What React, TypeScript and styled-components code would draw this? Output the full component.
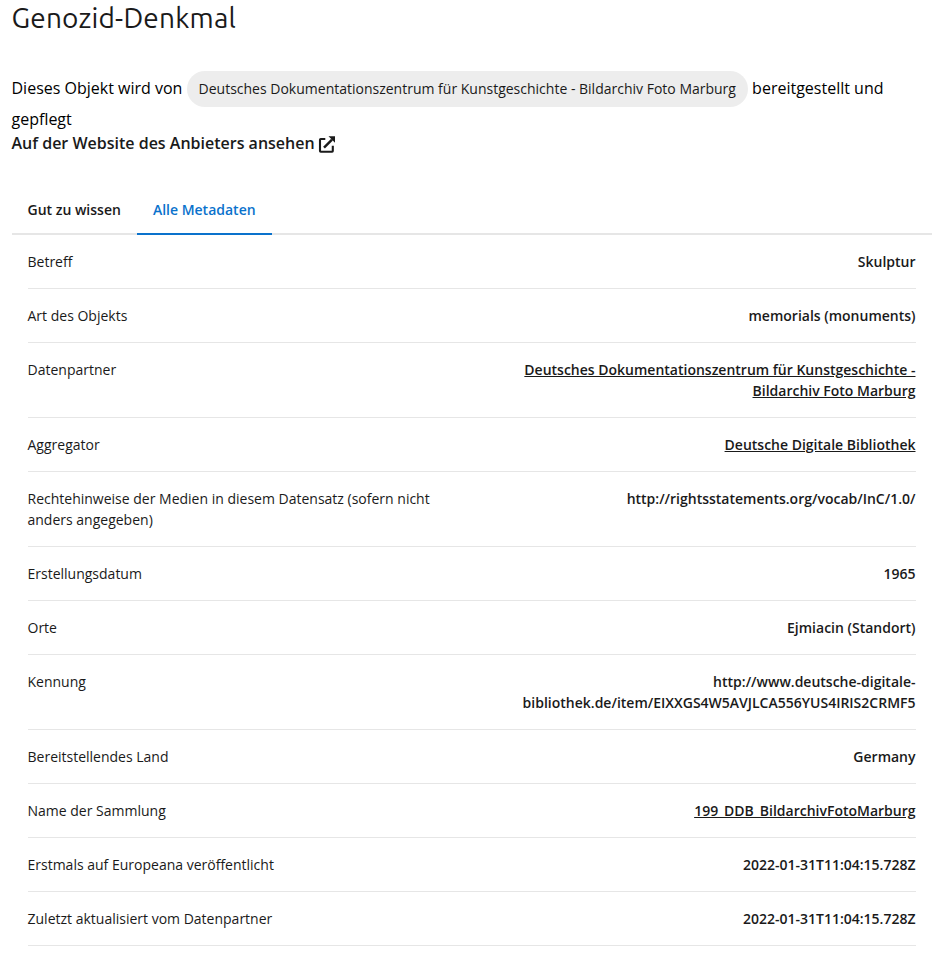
import React from "react";
import styled, { createGlobalStyle } from "styled-components";

const GlobalStyle = createGlobalStyle`
  * { box-sizing: border-box; }
  body { margin: 0; background: #fff; color: #000; font-family: "Open Sans", sans-serif; font-size: 16px; line-height: 1.5; overflow: hidden; }
`;
const Page = styled.main`
  padding: 0 17.5px 0 11.5px;
  height: 964px;
  overflow: hidden;
`;
const Title = styled.h1`
  margin: 0 0 36px;
  font-family: Ubuntu, "Noto Sans", sans-serif;
  font-weight: 400;
  font-size: 28px;
  letter-spacing: 0.2px;
  line-height: 35px;
  color: #1a1a1a;
`;
const Provider = styled.p`
  margin: 0;
  line-height: 24px;
`;
const Chip = styled.a`
  display: inline-block;
  height: 36px;
  padding: 0 12px;
  border-radius: 18px;
  background: #ededed;
  color: #1a1a1a;
  font-size: 14px;
  line-height: 36px;
`;
const ProviderLink = styled.a`
  display: flex;
  align-items: center;
  gap: 3px;
  height: 24px;
  font-weight: 600;
  color: #1a1a1a;
`;
const Tabs = styled.nav`
  display: flex;
  height: 49px;
  margin-top: 31px;
  border-bottom: 2px solid #e6e6e6;
`;
const Tab = styled.a<{ $active?: boolean }>`
  height: 49px;
  padding: 0 16px;
  font-size: 14px;
  font-weight: 600;
  line-height: 48px;
  color: ${(p) => (p.$active ? "#0a72cc" : "#1a1a1a")};
  border-bottom: 2px solid ${(p) => (p.$active ? "#0a72cc" : "transparent")};
`;
const List = styled.dl`
  margin: 0 16px;
  color: #1a1a1a;
`;
const Row = styled.div`
  display: flex;
  justify-content: space-between;
  padding: 16px 0;
  font-size: 14px;
  line-height: 21px;
  border-bottom: 1px solid #e6e6e6;
`;
const Label = styled.dt`
  width: 410px;
`;
const Value = styled.dd<{ $link?: boolean }>`
  margin: 0;
  font-weight: 600;
  text-align: right;
  white-space: pre-line;
  text-decoration: ${(p) => (p.$link ? "underline" : "none")};
`;

const rows: { label: string; value: string; link?: boolean }[] = [
  { label: "Betreff", value: "Skulptur" },
  { label: "Art des Objekts", value: "memorials (monuments)" },
  { label: "Datenpartner", value: "Deutsches Dokumentationszentrum für Kunstgeschichte -\nBildarchiv Foto Marburg", link: true },
  { label: "Aggregator", value: "Deutsche Digitale Bibliothek", link: true },
  { label: "Rechtehinweise der Medien in diesem Datensatz (sofern nicht anders angegeben)", value: "http://rightsstatements.org/vocab/InC/1.0/" },
  { label: "Erstellungsdatum", value: "1965" },
  { label: "Orte", value: "Ejmiacin (Standort)" },
  { label: "Kennung", value: "http://www.deutsche-digitale-\nbibliothek.de/item/EIXXGS4W5AVJLCA556YUS4IRIS2CRMF5" },
  { label: "Bereitstellendes Land", value: "Germany" },
  { label: "Name der Sammlung", value: "199_DDB_BildarchivFotoMarburg", link: true },
  { label: "Erstmals auf Europeana veröffentlicht", value: "2022-01-31T11:04:15.728Z" },
  { label: "Zuletzt aktualisiert vom Datenpartner", value: "2022-01-31T11:04:15.728Z" },
];

const IconSvg = styled.svg`
  display: block;
  margin-top: 2px;
`;

const ExternalIcon = () => (
  <IconSvg width="17" height="17" viewBox="0 0 17 17" fill="none" stroke="currentColor" strokeWidth="2.1">
    <path d="M7.3 3H2.7Q2 3 2 3.7V15.1Q2 15.8 2.7 15.8H14.1Q14.8 15.8 14.8 15.1V9.8" />
    <path d="M6 11.6 14 3.6" strokeWidth="2.5" />
    <path d="M10.5.3H17V6.8Z" fill="currentColor" stroke="none" />
  </IconSvg>
);

export default function App() {
  return (
    <Page>
      <GlobalStyle />
      <Title>Genozid-Denkmal</Title>
      <Provider>
        Dieses Objekt wird von <Chip>Deutsches Dokumentationszentrum für Kunstgeschichte - Bildarchiv Foto Marburg</Chip> bereitgestellt und gepflegt
      </Provider>
      <ProviderLink>
        Auf der Website des Anbieters ansehen
        <ExternalIcon />
      </ProviderLink>
      <Tabs>
        <Tab>Gut zu wissen</Tab>
        <Tab $active>Alle Metadaten</Tab>
      </Tabs>
      <List>
        {rows.map((r) => (
          <Row key={r.label}>
            <Label>{r.label}</Label>
            <Value $link={r.link}>{r.value}</Value>
          </Row>
        ))}
      </List>
    </Page>
  );
}
